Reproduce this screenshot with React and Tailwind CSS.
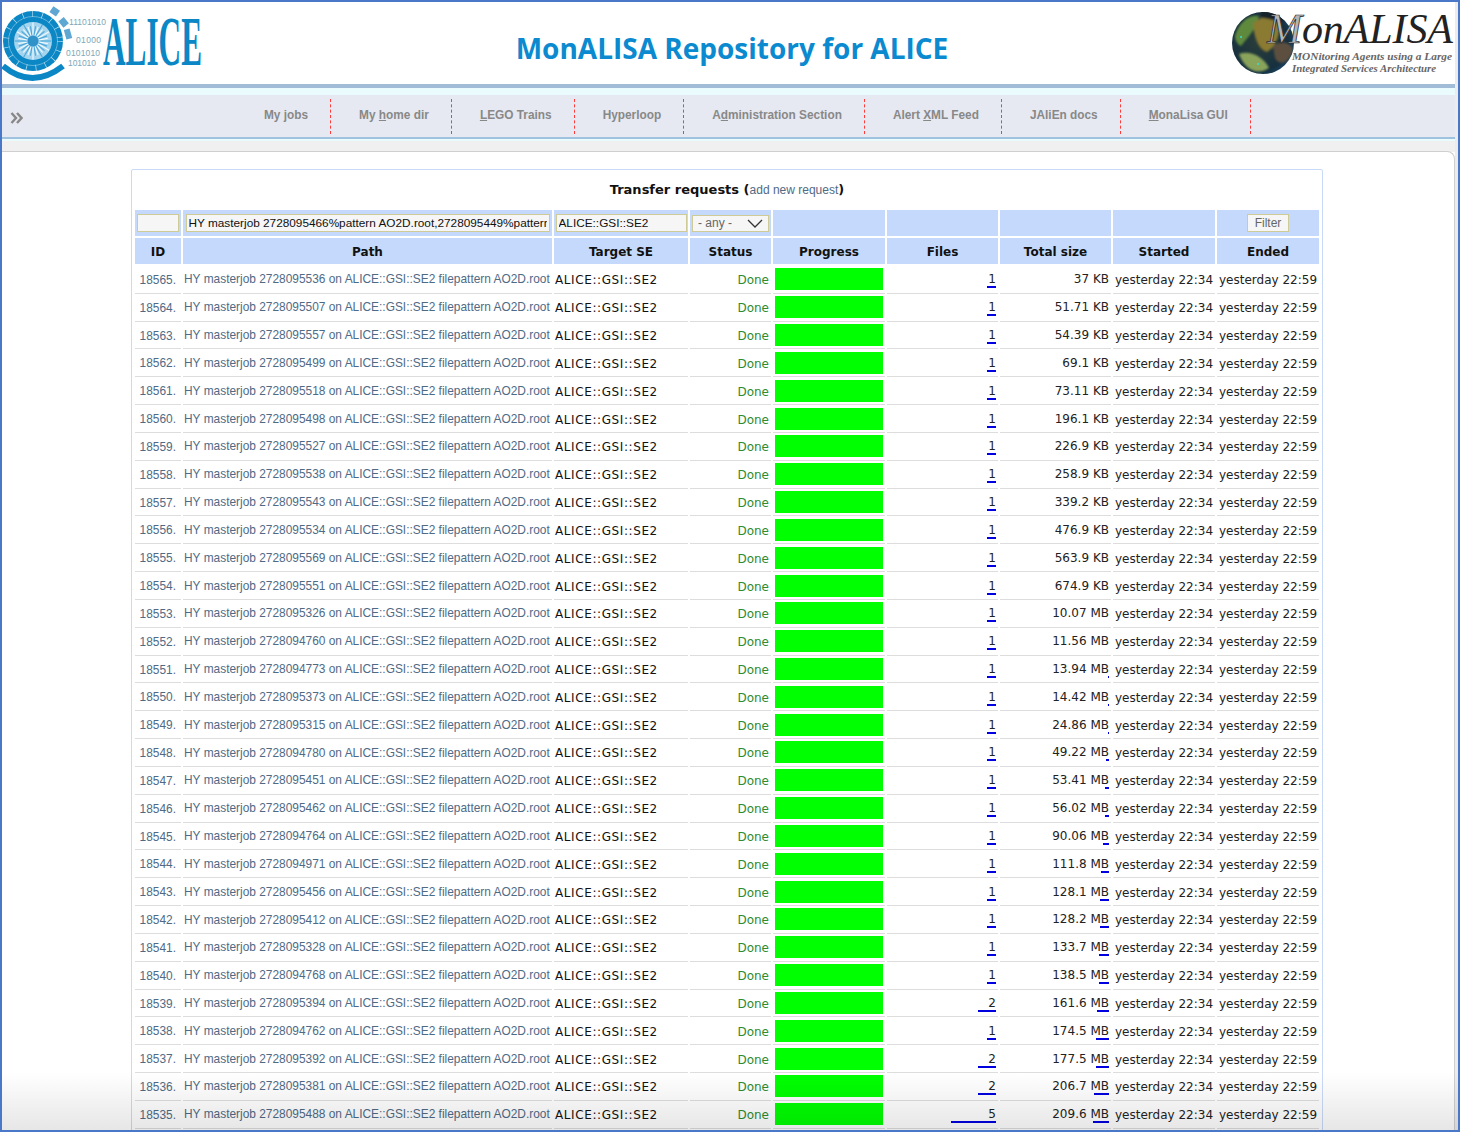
const rows = [
  [18565, 2728095536, "37 KB", 1],
  [18564, 2728095507, "51.71 KB", 1],
  [18563, 2728095557, "54.39 KB", 1],
  [18562, 2728095499, "69.1 KB", 1],
  [18561, 2728095518, "73.11 KB", 1],
  [18560, 2728095498, "196.1 KB", 1],
  [18559, 2728095527, "226.9 KB", 1],
  [18558, 2728095538, "258.9 KB", 1],
  [18557, 2728095543, "339.2 KB", 1],
  [18556, 2728095534, "476.9 KB", 1],
  [18555, 2728095569, "563.9 KB", 1],
  [18554, 2728095551, "674.9 KB", 1],
  [18553, 2728095326, "10.07 MB", 1],
  [18552, 2728094760, "11.56 MB", 1],
  [18551, 2728094773, "13.94 MB", 1],
  [18550, 2728095373, "14.42 MB", 1],
  [18549, 2728095315, "24.86 MB", 1],
  [18548, 2728094780, "49.22 MB", 1],
  [18547, 2728095451, "53.41 MB", 1],
  [18546, 2728095462, "56.02 MB", 1],
  [18545, 2728094764, "90.06 MB", 1],
  [18544, 2728094971, "111.8 MB", 1],
  [18543, 2728095456, "128.1 MB", 1],
  [18542, 2728095412, "128.2 MB", 1],
  [18541, 2728095328, "133.7 MB", 1],
  [18540, 2728094768, "138.5 MB", 1],
  [18539, 2728095394, "161.6 MB", 2],
  [18538, 2728094762, "174.5 MB", 1],
  [18537, 2728095392, "177.5 MB", 2],
  [18536, 2728095381, "206.7 MB", 2],
  [18535, 2728095488, "209.6 MB", 5],
];

const navItems = [
  ["My jobs"],
  ["My ", "h", "ome dir"],
  ["", "L", "EGO Trains"],
  ["Hyperloop"],
  ["A", "d", "ministration Section"],
  ["Alert ", "X", "ML Feed"],
  ["JAliEn docs"],
  ["", "M", "onaLisa GUI"],
];

const cols = "grid grid-cols-[46px_369px_134px_81px_112px_111px_111px_102px_102px] gap-x-[2px]";
const verdana = "font-['DejaVu_Sans',sans-serif]";
const arial = "font-['Liberation_Sans',sans-serif]";

function AliceLogo() {
  return (
    <svg width="206" height="82" viewBox="0 0 206 82" className="shrink-0 overflow-visible">
      <circle cx="31" cy="39" r="30" fill="#0a87c4" />
      <circle cx="31" cy="39" r="24.5" fill="none" stroke="#9fd0ea" strokeWidth="0.6" />
      <circle cx="31" cy="39" r="27" fill="none" stroke="#bfe2f3" strokeWidth="6" strokeDasharray="0.7 9" />
      <circle cx="31" cy="39" r="19" fill="#a5d4ee" />
      {Array.from({ length: 36 }).map((_, i) => {
        const a = (i / 36) * Math.PI * 2;
        const outer = i % 3 === 0 ? 18.5 : 15;
        return (
          <line
            key={i}
            x1={31 + Math.cos(a) * 6}
            y1={39 + Math.sin(a) * 6}
            x2={31 + Math.cos(a) * outer}
            y2={39 + Math.sin(a) * outer}
            stroke={i % 2 ? "#f2fbff" : "#4aa6d8"}
            strokeWidth="1.1"
          />
        );
      })}
      <circle cx="31" cy="39" r="5.5" fill="#2f92c8" />
      <path d="M1 64 Q 30 88 61 64" fill="none" stroke="#0a87c4" strokeWidth="6" />
      <g fill="#5ea7d2">
        <rect x="49" y="6" width="8" height="7" transform="rotate(35 53 9)" />
        <rect x="58" y="17" width="8" height="7" transform="rotate(50 62 20)" />
        <rect x="63" y="27" width="6" height="10" transform="rotate(-15 66 32)" />
      </g>
      <g fill="#7ea7b8" fontSize="8.5" fontFamily="Liberation Sans, sans-serif">
        <text x="67" y="23" textLength="37">11101010</text>
        <text x="74" y="41" textLength="25">01000</text>
        <text x="64" y="54" textLength="34">0101010</text>
        <text x="66" y="64" textLength="28">101010</text>
      </g>
      <text
        x="101"
        y="63"
        fill="#0a87c4"
        fontSize="69"
        fontWeight="700"
        fontFamily="Liberation Serif, serif"
        textLength="99"
        lengthAdjust="spacingAndGlyphs"
      >
        ALICE
      </text>
    </svg>
  );
}

function MonaLisaLogo() {
  return (
    <svg width="226" height="82" viewBox="0 0 226 82" className="shrink-0 overflow-visible">
      <defs>
        <radialGradient id="globe" cx="42%" cy="48%" r="62%">
          <stop offset="0%" stopColor="#2a3d3a" />
          <stop offset="78%" stopColor="#16303f" />
          <stop offset="100%" stopColor="#1c4a6e" />
        </radialGradient>
        <clipPath id="globeClip">
          <circle cx="34" cy="41" r="31" />
        </clipPath>
        <filter id="soft">
          <feGaussianBlur stdDeviation="1.2" />
        </filter>
      </defs>
      <circle cx="34" cy="41" r="31" fill="url(#globe)" />
      <g clipPath="url(#globeClip)" filter="url(#soft)">
        <path d="M6 34 C10 20 20 12 30 14 C28 26 20 34 12 44 C8 42 6 38 6 34Z" fill="#5f8a3c" />
        <path d="M24 22 C30 14 44 12 48 20 C54 30 46 46 38 50 C30 48 25 36 24 22Z" fill="#8a7a30" />
        <path d="M32 8 C40 6 52 10 58 18 C50 22 42 16 32 16Z" fill="#12202a" />
        <path d="M10 52 C20 48 34 54 40 66 C28 74 16 68 10 52Z" fill="#8aa35a" />
        <path d="M44 44 C52 38 62 40 64 48 C60 62 50 64 46 56Z" fill="#5d4f40" />
      </g>
      <circle cx="12" cy="35" r="1" fill="#33e0d0" />
      <circle cx="50" cy="29" r="1" fill="#33e0d0" />
      <circle cx="29" cy="62" r="1" fill="#33e0d0" />
      <text
        x="38"
        y="41"
        fontSize="42"
        fontStyle="italic"
        fontFamily="Liberation Serif, serif"
        fill="#222222"
        textLength="186"
        lengthAdjust="spacing"
      >
        <tspan fill="#b5b5b5" stroke="#222222" strokeWidth="0.7">M</tspan>onALISA
      </text>
      <text
        x="63"
        y="58"
        fill="#666666"
        fontSize="11"
        fontStyle="italic"
        fontWeight="700"
        fontFamily="Liberation Serif, serif"
        textLength="160"
        lengthAdjust="spacingAndGlyphs"
      >
        MONitoring Agents using a Large
      </text>
      <text
        x="63"
        y="70"
        fill="#666666"
        fontSize="11"
        fontStyle="italic"
        fontWeight="700"
        fontFamily="Liberation Serif, serif"
        textLength="144"
        lengthAdjust="spacingAndGlyphs"
      >
        Integrated Services Architecture
      </text>
    </svg>
  );
}

function NavBar() {
  return (
    <div className={`${arial} flex items-center h-[42px] bg-[#e6e9f1] pl-[8px]`}>
      <svg width="13" height="12" viewBox="0 0 13 12" fill="none" stroke="#888888" strokeWidth="2.4" className="shrink-0 mt-[3px]">
        <path d="M1.5 1l4.5 5-4.5 5M7 1l4.5 5-4.5 5" />
      </svg>
      <div className="flex items-center ml-[241px]">
        {navItems.map((item, i) => (
          <div
            key={i}
            className={`flex items-center h-[35px] border-r border-dashed border-[#ff3b3b] pr-[22px] text-[11.85px] font-bold text-[#888888] ${i === 0 ? "" : "pl-[28px]"}`}
          >
            <span className="-mt-[1px]">
              {item[0]}
              {item[1] && <u>{item[1]}</u>}
              {item[2]}
            </span>
          </div>
        ))}
      </div>
    </div>
  );
}

function Row({ row }) {
  const [id, job, size, files] = row;
  const [num, unit] = size.split(" ");
  // the size bar only shows up above ~14 MB
  const sizeBar = unit === "MB" ? Math.min(Math.floor(parseFloat(num) / 13), 17) : 0;
  const fileBar = files === 1 ? 9 : files === 2 ? 18 : 45;
  const cell = "h-full border-b border-[#dddddd] flex items-center";
  return (
    <div className={`${cols} h-[27.84px]`}>
      <div className={`${cell} ${arial} justify-end pr-[5px] pt-[3px] text-[11.9px] text-[#4f6a85]`}>{id}.</div>
      <div className={`${cell} ${arial} pl-[1px] pt-[2px] text-[11.92px] text-[#4f6a85] whitespace-nowrap`}>
        HY masterjob {job} on ALICE::GSI::SE2 filepattern AO2D.root
      </div>
      <div className={`${cell} ${verdana} pl-[1px] pt-[2px] text-[12px] tracking-[0.6px] text-[#111111]`}>ALICE::GSI::SE2</div>
      <div className={`${cell} ${verdana} justify-end pr-[2px] pt-[2px] text-[12px] text-[#2e8b2e]`}>Done</div>
      <div className={`${cell} justify-center`}>
        <div className="w-[108px] h-[22px] bg-[#00ff00]" />
      </div>
      <div className={`${cell} ${verdana} flex-col !items-end justify-center pr-[2px] pt-[2px] text-[12px] text-[#222222]`}>
        <span className="leading-[14px]">{files}</span>
        <span className="h-[2px] bg-[#0000e0]" style={{ width: fileBar }} />
      </div>
      <div className={`${cell} ${verdana} flex-col !items-end justify-center pr-[2px] pt-[2px] text-[12px] text-[#222222]`}>
        <span className="leading-[14px]">{size}</span>
        <span className="h-[2px] bg-[#0000e0]" style={{ width: sizeBar }} />
      </div>
      <div className={`${cell} ${verdana} pl-[2px] pt-[2px] text-[12px] text-[#222222] whitespace-nowrap`}>yesterday 22:34</div>
      <div className={`${cell} ${verdana} pl-[2px] pt-[2px] text-[12px] text-[#222222] whitespace-nowrap`}>yesterday 22:59</div>
    </div>
  );
}

function FilterRow() {
  const head = "bg-[#c4d9fb] h-[26px] flex items-center";
  const input = `${arial} h-[18px] border border-[#cfcb96] bg-[#f6f6f6] text-[11.8px] text-[#111111] px-[2px] outline-none`;
  return (
    <div className={cols}>
      <div className={`${head} justify-center`}>
        <input readOnly className={`${input} w-[42px]`} />
      </div>
      <div className={`${head} justify-center`}>
        <input
          readOnly
          className={`${input} w-[364px]`}
          value="HY masterjob 2728095466%pattern AO2D.root,2728095449%pattern AO2D.root"
        />
      </div>
      <div className={`${head} justify-center`}>
        <input readOnly className={`${input} w-[131px]`} value="ALICE::GSI::SE2" />
      </div>
      <div className={`${head} justify-center`}>
        <div className={`${arial} w-[77px] h-[17px] border border-[#cfcb96] bg-[#f6f6f6] flex items-center justify-between pl-[5px] pr-[5px] text-[12px] text-[#666666]`}>
          - any -
          <svg width="16" height="9" viewBox="0 0 16 9" fill="none" stroke="#333" strokeWidth="1.3">
            <path d="M1 1l7 7 7-7" />
          </svg>
        </div>
      </div>
      <div className={head} />
      <div className={head} />
      <div className={head} />
      <div className={head} />
      <div className={`${head} justify-center`}>
        <button className={`${arial} w-[42px] h-[18px] border border-[#cfcb96] bg-[#f6f6f6] text-[12px] leading-none text-[#666666]`}>
          Filter
        </button>
      </div>
    </div>
  );
}

function HeaderRow() {
  const labels = ["ID", "Path", "Target SE", "Status", "Progress", "Files", "Total size", "Started", "Ended"];
  return (
    <div className={`${cols} mt-[2px] mb-[2px]`}>
      {labels.map((l) => (
        <div key={l} className={`${verdana} bg-[#c4d9fb] h-[26px] pt-[1px] flex items-center justify-center text-[12px] font-bold text-[#111111]`}>
          {l}
        </div>
      ))}
    </div>
  );
}

export default function App() {
  return (
    <div className="relative h-[1132px] overflow-hidden bg-[#ececec] pl-[2px] pr-[5px] pt-[2px]">
      <div className="h-full bg-white">
        <div className="flex items-center justify-between h-[82px]">
          <AliceLogo />
          <h1 className="ml-[27px] mt-[9px] font-['Open_Sans',sans-serif] font-bold text-[28px] text-[#0b8ad0]">MonALISA Repository for ALICE</h1>
          <MonaLisaLogo />
        </div>
        <div className="h-[4px] bg-[#a0bcd6]" />
        <div className="h-[7px] bg-[#e9fbfd]" />
        <NavBar />
        <div className="h-[2px] bg-[#9fc3de]" />
        <div className="h-[2px] bg-[#e9fbfd]" />
        <div className="h-[11px] bg-[#f0f0f0]" />
        <div className="-mt-[1px] rounded-tr-[8px] border-t border-r border-[#cfcfcf] bg-white pt-[17px] pl-[129px]">
          <div className="w-[1192px] rounded-[2px] border border-[#c9d9f8] pl-[3px] pb-[40px]">
            <div className={`${verdana} h-[40px] flex items-center justify-center pr-[3px] text-[13px] font-bold text-[#111111]`}>
              Transfer requests (<span className={`${arial} text-[12px] font-normal text-[#4f6a85]`}>add new request</span>)
            </div>
            <FilterRow />
            <HeaderRow />
            {rows.map((r) => (
              <Row key={r[0]} row={r} />
            ))}
          </div>
        </div>
      </div>
      {/* window shadow and frame lie over the page */}
      <div className="pointer-events-none absolute inset-x-0 bottom-0 h-[60px] bg-gradient-to-b from-transparent to-black/10" />
      <div className="pointer-events-none absolute inset-0 border-2 border-[#4a78c8]" />
    </div>
  );
}
